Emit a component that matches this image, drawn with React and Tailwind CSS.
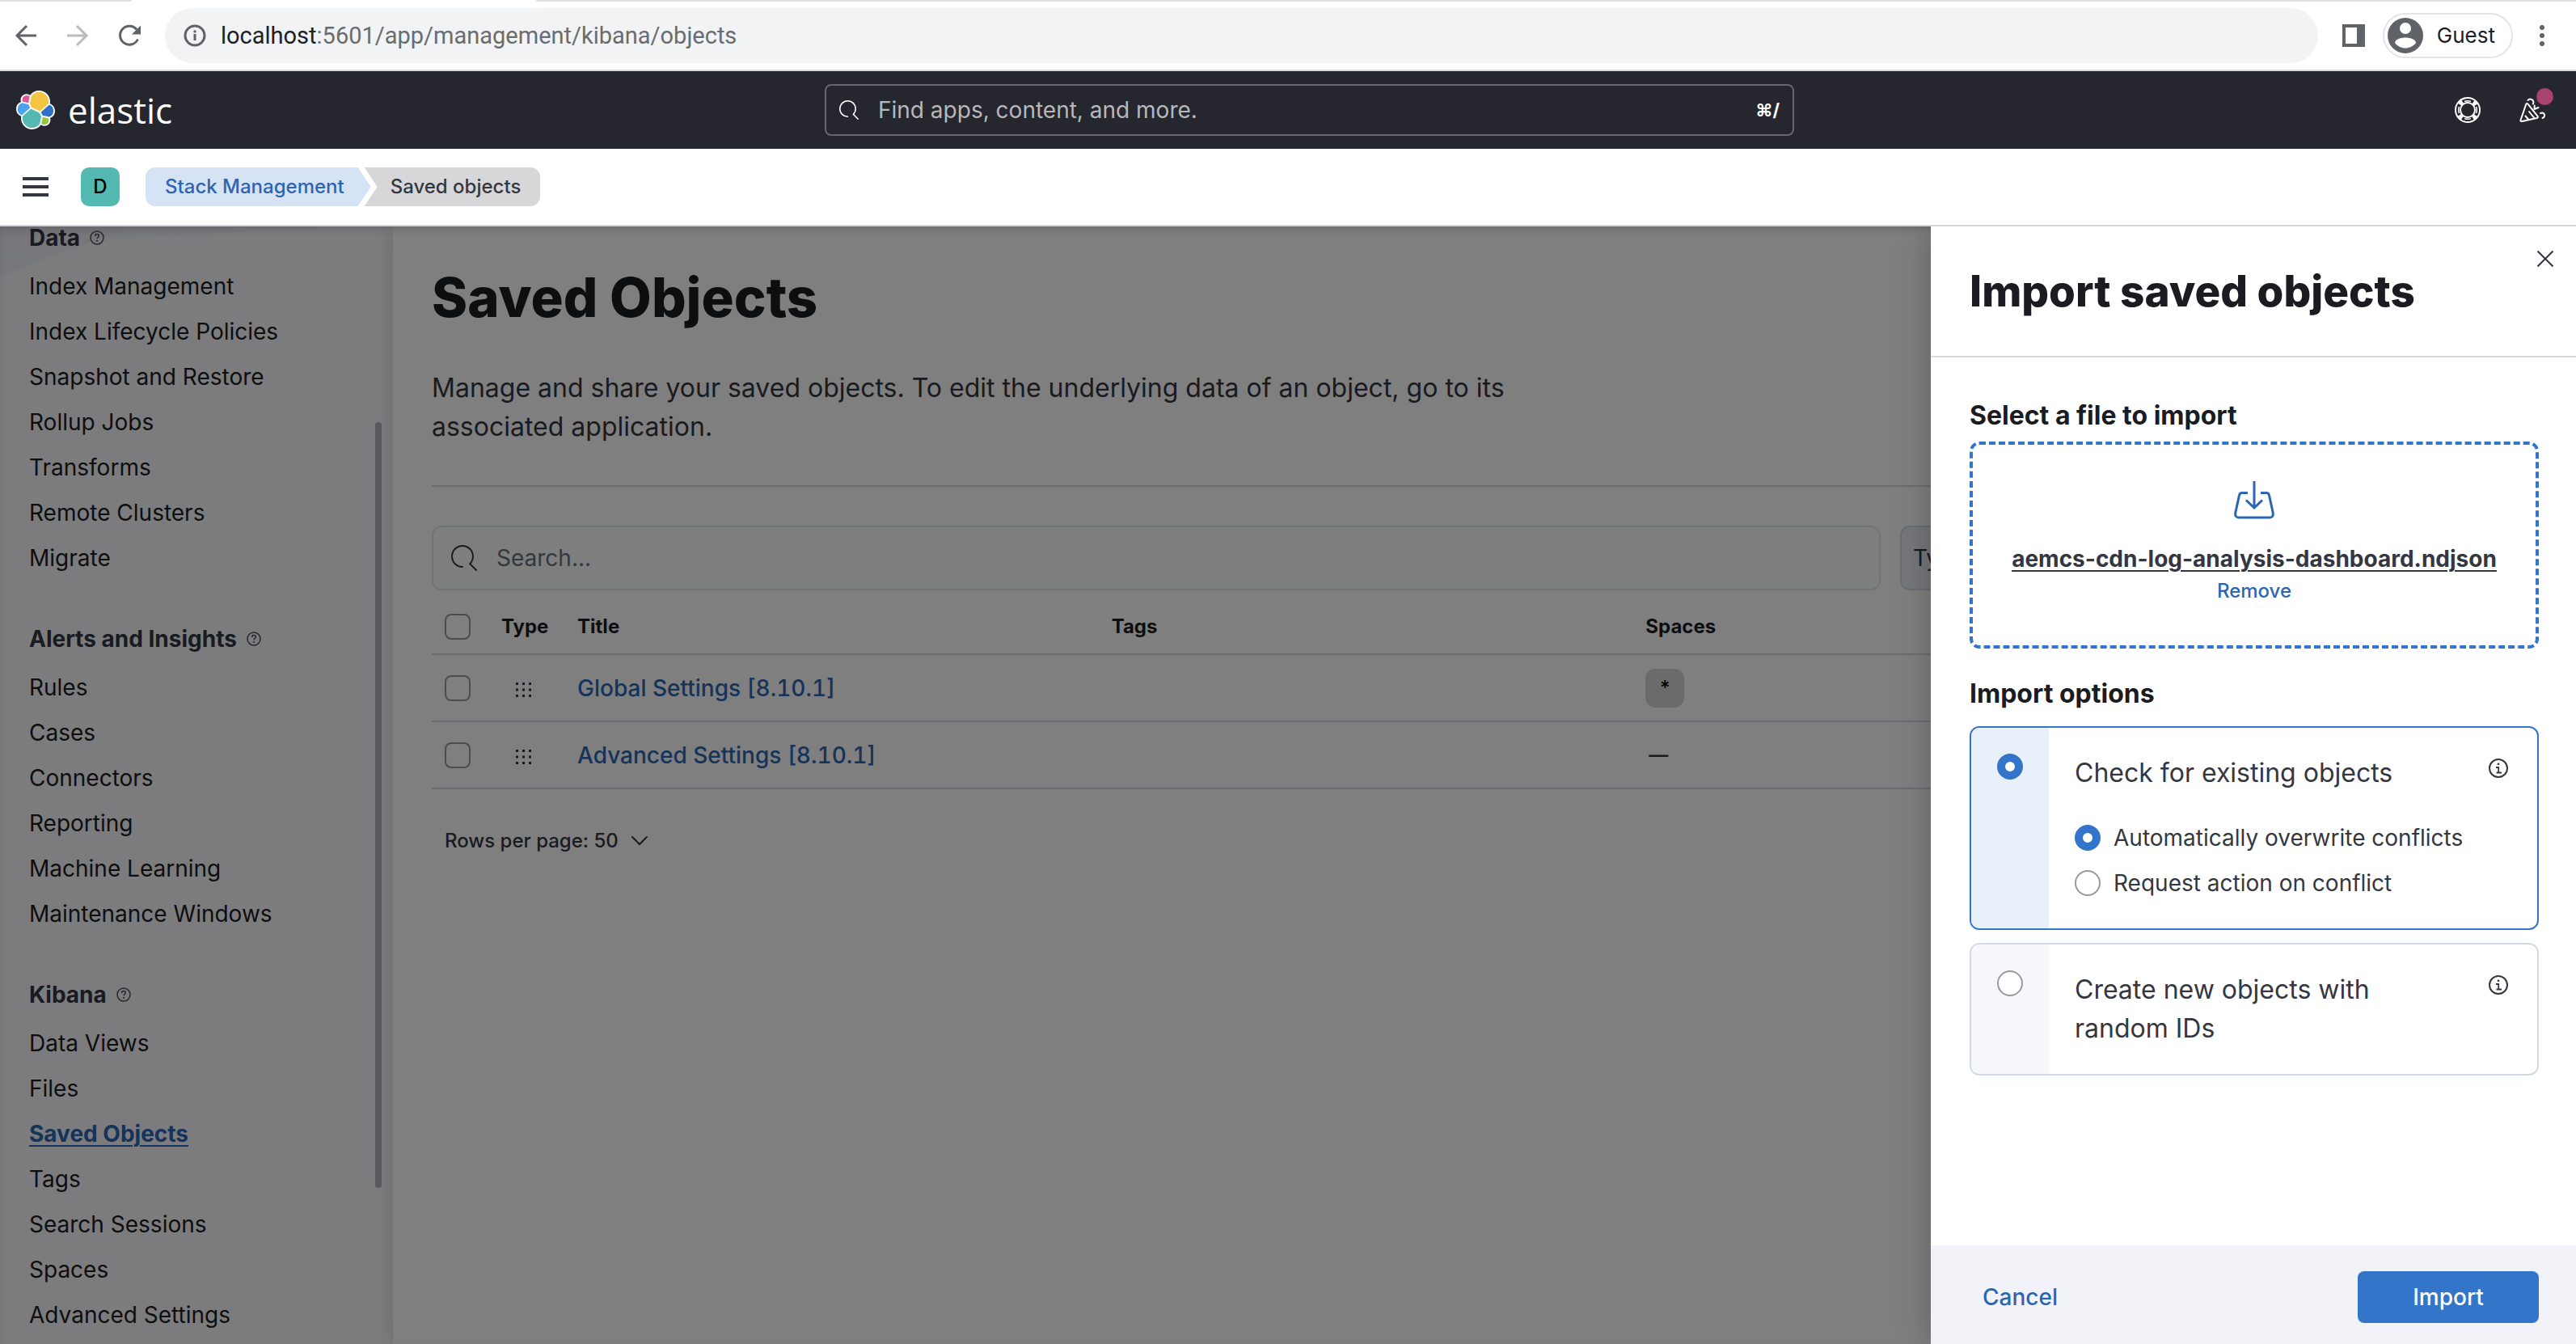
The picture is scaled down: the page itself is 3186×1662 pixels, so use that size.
import React, { useState } from "react";

const NAV = [
  {
    title: "Data",
    items: [
      "Index Management",
      "Index Lifecycle Policies",
      "Snapshot and Restore",
      "Rollup Jobs",
      "Transforms",
      "Remote Clusters",
      "Migrate",
    ],
  },
  {
    title: "Alerts and Insights",
    items: ["Rules", "Cases", "Connectors", "Reporting", "Machine Learning", "Maintenance Windows"],
  },
  {
    title: "Kibana",
    items: ["Data Views", "Files", "Saved Objects", "Tags", "Search Sessions", "Spaces", "Advanced Settings"],
  },
];

const ROWS = [
  { title: "Global Settings [8.10.1]", shared: true },
  { title: "Advanced Settings [8.10.1]", shared: false },
];

const RADIO =
  "size-8 shrink-0 appearance-none rounded-full border-2 border-[#98999c] bg-white checked:border-[10px] checked:border-[#3375c8]";
const CHECKBOX = "block size-8 appearance-none rounded-lg border-2 border-[#98999c] bg-white";

function SearchIcon({ className }) {
  return (
    <svg className={className} viewBox="0 0 16 16" fill="currentColor" aria-hidden="true">
      <path d="M11.271 11.978l3.872 3.873a.502.502 0 00.708 0 .502.502 0 000-.708l-3.565-3.564c2.38-2.747 2.267-6.923-.342-9.532-2.73-2.73-7.17-2.73-9.898 0-2.728 2.729-2.728 7.17 0 9.9a6.955 6.955 0 004.949 2.05.5.5 0 000-1 5.96 5.96 0 01-4.242-1.757 6.01 6.01 0 010-8.486 6.01 6.01 0 018.485 0 6.01 6.01 0 010 8.486.5.5 0 000 .707z" />
    </svg>
  );
}

function ElasticLogo() {
  return (
    <svg className="size-12" viewBox="0 0 32 32" aria-hidden="true">
      <path
        fill="#fff"
        d="M32 16.77c0-2.68-1.664-5.03-4.17-5.939a9.08 9.08 0 00.168-1.719 9.112 9.112 0 00-9.11-9.11 9.085 9.085 0 00-7.367 3.763 4.836 4.836 0 00-2.966-1.008 4.842 4.842 0 00-4.837 4.837c0 .587.105 1.162.302 1.696A6.315 6.315 0 000 15.227a6.304 6.304 0 004.185 5.943 9.102 9.102 0 00-.165 1.72 9.093 9.093 0 009.092 9.092 9.08 9.08 0 007.368-3.77 4.812 4.812 0 002.966 1.02 4.843 4.843 0 004.837-4.837c0-.587-.105-1.162-.302-1.696A6.317 6.317 0 0032 16.77"
      />
      <path fill="#f4c443" d="M12.58 13.787l7.002 3.211 7.066-6.213a7.85 7.85 0 00.152-1.557c0-4.298-3.486-7.983-7.883-7.983a7.8 7.8 0 00-6.422 3.39l-1.176 6.08z" />
      <path fill="#54b9b0" d="M5.333 21.228a7.98 7.98 0 00-.153 1.577c0 4.32 3.503 7.922 7.923 7.922a7.82 7.82 0 006.442-3.396l1.165-6.082-1.555-2.98-7.03-3.21z" />
      <path fill="#e2579a" d="M5.288 9.086l4.8 1.137 1.05-5.475A3.8 3.8 0 005.03 7.77c0 .454.08.898.258 1.316z" />
      <path fill="#4ba3ee" d="M4.871 10.231A5.34 5.34 0 001.303 15.27a5.36 5.36 0 003.418 4.98l6.735-6.1-1.236-2.652z" />
      <path fill="#95c53d" d="M20.87 27.231a3.76 3.76 0 002.318.81 3.8 3.8 0 003.79-3.79c0-.454-.08-.898-.258-1.316l-4.794-1.12z" />
      <path fill="#3070c6" d="M21.849 20.494l5.277 1.228a5.34 5.34 0 003.568-5.04 5.36 5.36 0 00-3.42-4.974l-6.913 6.074z" />
    </svg>
  );
}

function InfoIcon() {
  return (
    <svg className="size-6" viewBox="0 0 24 24" fill="none" stroke="#343741" strokeWidth="2" aria-hidden="true">
      <circle cx="12" cy="12" r="11" />
      <path d="M9 11h3.200v7M9.500 17.500H16" strokeWidth="1.800" />
      <circle cx="12" cy="6.800" r="1.400" fill="#343741" stroke="none" />
    </svg>
  );
}

function HelpIcon() {
  return (
    <svg className="size-[18px]" viewBox="0 0 18 18" fill="none" stroke="#4c4e55" strokeWidth="1.500" aria-hidden="true">
      <circle cx="9" cy="9" r="8" />
      <path d="M6.700 7c0-1.500 1-2.400 2.300-2.400s2.300.900 2.300 2.100c0 1.500-2.200 1.600-2.200 3.600" />
      <circle cx="9" cy="13" r="1.100" fill="#4c4e55" stroke="none" />
    </svg>
  );
}

function BrowserBar() {
  return (
    <div className="flex h-[88px] flex-col border-b-2 border-[#dadce0] bg-white">
      <div className="flex h-0.5">
        <div className="w-[163px] bg-[#dfe0e6]" />
        <div className="w-[500px]" />
        <div className="flex-1 bg-[#dfe0e6]" />
      </div>
      <div className="flex flex-1 items-center gap-7 pr-[38px] pl-4">
        <div className="flex gap-8">
          <button type="button" aria-label="Back" className="text-[#5f6368]">
            <svg className="size-8" viewBox="0 0 32 32" fill="none" stroke="currentColor" strokeWidth="3">
              <path d="M29 16H5M17 4L5 16l12 12" />
            </svg>
          </button>
          <button type="button" aria-label="Forward" className="text-[#bbbcbe]">
            <svg className="size-8" viewBox="0 0 32 32" fill="none" stroke="currentColor" strokeWidth="3">
              <path d="M3 16h24M15 4l12 12-12 12" />
            </svg>
          </button>
          <button type="button" aria-label="Reload" className="text-[#5f6368]">
            <svg className="size-8" viewBox="0 0 32 32" fill="none" stroke="currentColor" strokeWidth="3">
              <path d="M26.500 20.500A11.500 11.500 0 1 1 25 8.500" />
              <path d="M30 3.500V14.500H19z" fill="currentColor" stroke="none" />
            </svg>
          </button>
        </div>
        <div className="flex flex-1 items-center gap-[30px]">
          <div className="flex h-[68px] flex-1 items-center gap-[18px] rounded-full bg-[#f1f3f4] px-[23px]">
            <svg className="size-7" viewBox="0 0 28 28" fill="none" stroke="#5f6368" strokeWidth="3">
              <circle cx="14" cy="14" r="12" />
              <path d="M14 12v8M14 7.500v3" />
            </svg>
            <p className="font-[Roboto,sans-serif] text-[29px] leading-9 text-[#6a6c70]">
              <span className="text-[#202124]">localhost</span>:5601/app/management/kibana/objects
            </p>
          </div>
          <button type="button" aria-label="Side panel">
            <svg className="size-7" viewBox="0 0 28 28">
              <path fill="#5f6368" fillRule="evenodd" d="M0 0h28v28H0zM4 4v20h14V4z" />
            </svg>
          </button>
        </div>
        <div className="-ml-1.5 flex items-center gap-8">
          <button
            type="button"
            className="flex h-14 items-center gap-[17px] rounded-full border-2 border-[#e4e4e6] pr-5 pl-1 text-[26px] leading-8 text-[#202124]"
          >
            <svg className="size-11" viewBox="0 0 44 44">
              <circle cx="22" cy="22" r="22" fill="#5f6368" />
              <circle cx="22" cy="13" r="7" fill="#fff" />
              <path d="M9 31c0-4.500 8-6.500 13-6.500s13 2 13 6.500c-3 4-8 6.500-13 6.500S12 35 9 31z" fill="#fff" />
            </svg>
            Guest
          </button>
          <button type="button" aria-label="Browser menu">
            <svg className="h-8 w-2" viewBox="0 0 8 32" fill="#5f6368">
              <circle cx="4" cy="6" r="3" />
              <circle cx="4" cy="16" r="3" />
              <circle cx="4" cy="26" r="3" />
            </svg>
          </button>
        </div>
      </div>
    </div>
  );
}

function ElasticBar() {
  return (
    <div className="grid h-24 grid-cols-[1000fr_1199fr_933fr] items-center bg-[#25262e] pr-[34px] pl-5">
      <a href="#home" className="flex items-center gap-4 text-white">
        <ElasticLogo />
        <span className="font-['Open_Sans',sans-serif] text-[44px] leading-[60px]">elastic</span>
      </a>
      <label className="flex h-16 items-center gap-6 rounded-lg border-2 border-[#66676d] px-4 text-white">
        <SearchIcon className="size-6" />
        <input
          type="search"
          aria-label="Find apps, content, and more."
          placeholder="Find apps, content, and more."
          className="min-w-0 flex-1 bg-transparent text-[28px] leading-9 outline-none placeholder:text-[#b7b8bc]"
        />
        <kbd className="font-[Inter,'DejaVu_Sans',sans-serif] text-[22px] font-bold">⌘/</kbd>
      </label>
      <div className="flex items-center justify-end gap-12">
        <button type="button" aria-label="Help">
          <svg className="size-8" viewBox="0 0 32 32" fill="none" stroke="#fff" strokeWidth="2">
            <circle cx="16" cy="16" r="15" />
            <circle cx="16" cy="16" r="9" />
            <circle cx="16" cy="16" r="12" strokeWidth="6" strokeDasharray="4.800 14.050" strokeDashoffset="-7.025" />
            <path d="M12 5.400q4-1.400 8 0M12 26.600q4 1.400 8 0M5.400 12q-1.400 4 0 8M26.600 12q1.400 4 0 8" strokeWidth="1.500" />
          </svg>
        </button>
        <button type="button" aria-label="What's new" className="relative mr-1">
          <svg className="size-8" viewBox="0 0 32 32" fill="none" stroke="#fff" strokeWidth="2" strokeLinecap="round" strokeLinejoin="round">
            <path d="M1.500 28.500L8.200 9q.8-2 2.300-.4l12 15q1.200 1.800-1 2.400L3.500 30q-2.500.4-2-1.500z" />
            <path d="M12 18l6 7.500M7.500 23.500l3.500 4" />
            <path d="M10.500 4q2-2.500 5-.8 3 2 1.300 5.300M26 20q4-1.500 5 1.800 .6 3.200-2.500 4.200M18.500 15l.2-4.500M18.500 15l5-2" />
          </svg>
          <span className="absolute -top-[11px] left-[21px] size-[21px] rounded-full bg-[#a8436f]" />
        </button>
      </div>
    </div>
  );
}

function BreadcrumbBar() {
  return (
    <div className="flex h-24 items-center border-b-2 border-[#d0d5e2] bg-white pl-7 text-2xl font-medium">
      <button type="button" aria-label="Toggle navigation">
        <svg className="h-6 w-8" viewBox="0 0 32 24" fill="#343741">
          <path d="M0 0h32v4H0zM0 10h32v4H0zM0 20h32v4H0z" />
        </svg>
      </button>
      <button type="button" className="ml-10 size-12 rounded-[10px] bg-[#54b9b0] text-black">
        D
      </button>
      <nav aria-label="Breadcrumb" className="ml-8 flex leading-[48px]">
        <a
          href="#management"
          className="rounded-l-xl bg-[#d6e3f4] pr-[33px] pl-6 text-[#2c66b2] [clip-path:polygon(0_0,calc(100%_-_16px)_0,100%_50%,calc(100%_-_16px)_100%,0_100%)]"
        >
          Stack Management
        </a>
        <span
          aria-current="page"
          className="-ml-2 rounded-r-xl bg-[#d7d7d9] pr-6 pl-8 text-[#343741] [clip-path:polygon(0_0,100%_0,100%_100%,0_100%,16px_50%)]"
        >
          Saved objects
        </span>
      </nav>
    </div>
  );
}

function Sidebar() {
  return (
    <aside className="relative flex w-[486px] shrink-0 bg-[#f8f9fc] text-[28px]">
      <svg className="absolute top-0 left-0 h-[70px] w-[460px]" viewBox="0 0 460 70" fill="#eceef6" aria-hidden="true">
        <path d="M0 0h180Q80 26 0 64z" opacity=".8" />
        <path d="M0 0h400L130 17 0 31z" opacity=".6" />
      </svg>
      <nav aria-label="Management" className="relative flex-1 pl-9">
        {NAV.map((group) => (
          <section key={group.title} className="mb-[58px]">
            <h2 className="mb-[18px] flex items-center gap-3 leading-7 font-bold text-[#343741]">
              {group.title}
              <HelpIcon />
            </h2>
            <ul>
              {group.items.map((item) => (
                <li key={item} className="leading-[56px]">
                  <a
                    href={"#" + item.toLowerCase().replaceAll(" ", "-")}
                    className={
                      item === "Saved Objects"
                        ? "font-bold text-[#2c66b2] underline decoration-2 underline-offset-4"
                        : "text-[#1a1c21]"
                    }
                  >
                    {item}
                  </a>
                </li>
              ))}
            </ul>
          </section>
        ))}
      </nav>
      <div className="relative mr-3.5 mb-[193px] mt-[242px] w-2 rounded-full bg-[#b2b5bd]" />
    </aside>
  );
}

function ObjectsTable() {
  return (
    <table className="mt-3 w-full table-fixed text-left">
      <colgroup>
        <col className="w-[70px]" />
        <col className="w-[94px]" />
        <col />
        <col />
        <col />
        <col className="w-[460px]" />
      </colgroup>
      <thead>
        <tr className="h-[67px] border-b-2 border-[#d3dae6] text-2xl leading-8 font-semibold text-[#1a1c21]">
          <th className="pl-4">
            <input type="checkbox" aria-label="Select all rows" className={CHECKBOX} />
          </th>
          <th className="pl-4">Type</th>
          <th className="pl-4">Title</th>
          <th className="pl-4">Tags</th>
          <th className="pl-4">Spaces</th>
          <th />
        </tr>
      </thead>
      <tbody>
        {ROWS.map((row) => (
          <tr key={row.title} className="h-[83px] border-b-2 border-[#d3dae6] text-[28px] leading-9">
            <td className="pl-4">
              <input type="checkbox" aria-label={"Select " + row.title} className={CHECKBOX} />
            </td>
            <td className="pl-[34px]">
              <svg className="mt-1 size-5" viewBox="0 0 20 20" fill="#343741" aria-hidden="true">
                <path d="M0 1h3v3H0zM8 1h3v3H8zM16 1h3v3h-3zM0 8.500h3v3H0zM8 8.500h3v3H8zM16 8.500h3v3h-3zM0 16h3v3H0zM8 16h3v3H8zM16 16h3v3h-3z" />
              </svg>
            </td>
            <td className="pl-4">
              <a href="#object" className="font-medium text-[#2c66b2] tabular-nums">
                {row.title}
              </a>
            </td>
            <td />
            <td className="pl-4 text-[#343741]">
              {row.shared ? (
                <span className="block size-12 rounded-xl bg-[#d7d7d9] text-center text-2xl leading-[48px] font-medium text-black">
                  *
                </span>
              ) : (
                <span className="block pl-1 text-2xl font-semibold">—</span>
              )}
            </td>
            <td />
          </tr>
        ))}
      </tbody>
    </table>
  );
}

function Content() {
  return (
    <main className="relative min-w-0 flex-1 bg-white pr-[46px] pl-12 shadow-[0_0_24px_rgba(0,0,0,0.14)]">
      <h1 className="mt-12 text-[67px] leading-20 font-extrabold text-[#1a1c21]">Saved Objects</h1>
      <p className="mt-12 max-w-[1360px] text-[32px] leading-12 text-[#343741]">
        Manage and share your saved objects. To edit the underlying data of an object, go to its associated application.
      </p>
      <hr className="mt-12 border-t-2 border-[#d3dae6]" />
      <div className="mt-12 flex h-20 gap-6 text-[28px]">
        <label className="flex flex-1 items-center gap-6 rounded-xl border-2 border-[#e3e6f0] bg-[#fbfcfd] px-[22px] text-[#343741]">
          <SearchIcon className="size-8" />
          <input
            type="search"
            aria-label="Search"
            placeholder="Search..."
            className="min-w-0 flex-1 bg-transparent outline-none placeholder:text-[#69707d]"
          />
        </label>
        <button
          type="button"
          className="w-[790px] rounded-xl border-2 border-[#d3dae6] bg-[#eceff5] px-3.5 text-left text-[#343741]"
        >
          Type
        </button>
      </div>
      <ObjectsTable />
      <button type="button" className="mt-10 ml-4 flex items-center gap-4 text-2xl leading-12 font-medium text-[#343741]">
        Rows per page: 50
        <svg className="h-3 w-5" viewBox="0 0 20 12" fill="none" stroke="currentColor" strokeWidth="2" strokeLinecap="round">
          <path d="M1 1l9 9 9-9" />
        </svg>
      </button>
    </main>
  );
}

function OptionCard({ id, label, checked, onSelect, children }) {
  return (
    <div
      className={
        checked
          ? "flex overflow-hidden rounded-xl border-2 border-[#3375c8]"
          : "flex overflow-hidden rounded-xl border-2 border-[#d3dae6]"
      }
    >
      <div className={checked ? "w-24 bg-[#e7eff9] pt-8 pl-8" : "w-24 bg-[#f6f8fc] pt-8 pl-8"}>
        <input type="radio" id={id} name="import-mode" checked={checked} onChange={onSelect} className={"block " + RADIO} />
      </div>
      <div className="flex-1 py-8 pr-9 pl-8">
        <div className="flex items-start justify-between">
          <label htmlFor={id} className="max-w-[400px] text-[32px] leading-12">
            {label}
          </label>
          <button type="button" aria-label={"About: " + label} className="mt-1.5">
            <InfoIcon />
          </button>
        </div>
        {children}
      </div>
    </div>
  );
}

function ImportFlyout() {
  const [mode, setMode] = useState("check");
  const [conflict, setConflict] = useState("overwrite");
  return (
    <section
      role="dialog"
      aria-labelledby="flyout-title"
      className="absolute inset-y-0 right-0 z-20 flex w-[798px] flex-col bg-white text-[#343741] shadow-[0_0_40px_rgba(0,0,0,0.25)]"
    >
      <header className="border-b-2 border-[#d3dae6] px-12 pt-12 pb-12">
        <h2 id="flyout-title" className="text-[53px] leading-16 font-extrabold text-[#1a1c21]">
          Import saved objects
        </h2>
        <button type="button" aria-label="Close" className="absolute top-[30px] right-7">
          <svg className="size-5" viewBox="0 0 20 20" fill="none" stroke="#343741" strokeWidth="2">
            <path d="M.5.500l19 19M19.500.500l-19 19" />
          </svg>
        </button>
      </header>
      <div className="flex-1 pt-12 pr-[46px] pl-12">
        <h3 className="text-[32px] leading-12 font-bold text-[#1a1c21]">Select a file to import</h3>
        <div className="mt-2 flex h-64 flex-col items-center rounded-xl border-4 border-dashed border-[#3375c8] pt-[45px]">
          <svg className="h-12 w-[50px]" viewBox="0 0 50 48" fill="none" stroke="#2c66b2" strokeWidth="3" aria-hidden="true">
            <path d="M17 14.500H10Q7 14.500 6.500 17.500L1.800 39Q1 45 6 45H44Q49 45 48.200 39L43.500 17.500Q43 14.500 40 14.500H33" />
            <path d="M25 0v32M15 23.500l10 9.500 10-9.500" />
          </svg>
          <p className="mt-7 text-[28px] leading-10 font-bold underline decoration-2 underline-offset-4">
            aemcs-cdn-log-analysis-dashboard.ndjson
          </p>
          <button type="button" className="text-2xl leading-10 font-medium text-[#2c66b2]">
            Remove
          </button>
        </div>
        <h3 className="mt-8 text-[32px] leading-12 font-bold text-[#1a1c21]">Import options</h3>
        <div className="mt-4 flex flex-col gap-4">
          <OptionCard
            id="mode-check"
            label="Check for existing objects"
            checked={mode === "check"}
            onSelect={() => setMode("check")}
          >
            <div className="mt-[38px] mb-1.5 flex flex-col gap-5 text-[28px] leading-9">
              <label className="flex items-center gap-4">
                <input
                  type="radio"
                  name="conflict"
                  checked={conflict === "overwrite"}
                  onChange={() => setConflict("overwrite")}
                  className={RADIO}
                />
                Automatically overwrite conflicts
              </label>
              <label className="flex items-center gap-4">
                <input
                  type="radio"
                  name="conflict"
                  checked={conflict === "ask"}
                  onChange={() => setConflict("ask")}
                  className={RADIO}
                />
                Request action on conflict
              </label>
            </div>
          </OptionCard>
          <OptionCard
            id="mode-create"
            label="Create new objects with random IDs"
            checked={mode === "create"}
            onSelect={() => setMode("create")}
          />
        </div>
      </div>
      <footer className="flex items-center justify-between bg-[#f1f3f9] pt-8 pr-[46px] pb-[26px] pl-12 text-[28px] leading-16 font-medium">
        <button type="button" className="px-4 text-[#2c66b2]">
          Cancel
        </button>
        <button type="button" className="w-56 rounded-lg bg-[#3375c8] text-center text-white">
          Import
        </button>
      </footer>
    </section>
  );
}

export default function App() {
  return (
    <div className="flex h-screen flex-col overflow-hidden font-[Inter,sans-serif]">
      <header className="relative">
        <BrowserBar />
        <ElasticBar />
        <BreadcrumbBar />
      </header>
      <div className="relative flex min-h-0 flex-1 overflow-hidden">
        <Sidebar />
        <Content />
        <div className="absolute inset-0 bg-black/50 shadow-[inset_0_6px_12px_-4px_rgba(0,0,0,0.2)]" />
        <ImportFlyout />
      </div>
    </div>
  );
}
